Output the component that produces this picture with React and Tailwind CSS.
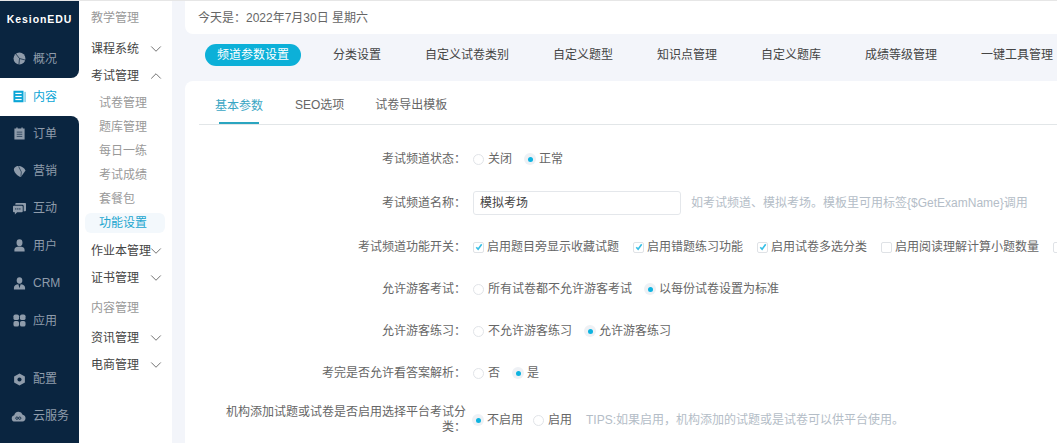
import React from 'react';
import { ChevronDown, ChevronUp } from 'lucide-react';

const NAVY = '#0a2540';

function PieIcon() {
  return (
    <svg width="13" height="13" viewBox="0 0 14 14">
      <circle cx="7" cy="7" r="6.4" fill="currentColor" />
      <path d="M7 7L3.2 2.2M7 7l6 1.600M7 7l-.6 6.400" stroke={NAVY} strokeWidth="0.8" fill="none" />
    </svg>
  );
}

function ListIcon() {
  return (
    <svg width="13" height="13" viewBox="0 0 14 14">
      <rect x="0.5" y="0.8" width="10.800" height="12.400" fill="currentColor" />
      <rect x="12.300" y="2" width="1.400" height="11" fill="currentColor" opacity="0.6" />
      <rect x="2.500" y="3" width="6.800" height="1.300" fill="#fff" />
      <rect x="2.500" y="6.300" width="6.800" height="1.300" fill="#fff" />
      <rect x="2.500" y="9.600" width="6.800" height="1.300" fill="#fff" />
    </svg>
  );
}

function OrderIcon() {
  return (
    <svg width="13" height="13" viewBox="0 0 14 14">
      <path d="M1.500 1.500h2V.5h1.500v1h4v-1h1.500v1h2v12h-11z" fill="currentColor" />
      <rect x="4" y="5" width="6" height="1" fill={NAVY} opacity="0.7" />
      <rect x="4" y="7.300" width="6" height="1" fill={NAVY} opacity="0.7" />
      <rect x="4" y="9.600" width="6" height="1" fill={NAVY} opacity="0.7" />
    </svg>
  );
}

function MarketIcon() {
  return (
    <svg width="13" height="13" viewBox="0 0 14 14">
      <path d="M1 5.500C.6 3 3 1 6 1c3 0 6 1.800 7.500 4.800L8.500 13C5 12.500 1.500 8.500 1 5.500z" fill="currentColor" />
      <path d="M6 1.500L9 7.500 8.500 12.500" stroke={NAVY} strokeWidth="0.7" fill="none" />
    </svg>
  );
}

function ChatIcon() {
  return (
    <svg width="13" height="13" viewBox="0 0 14 14">
      <path d="M3.500 1h9.500a1 1 0 0 1 1 1v7a1 1 0 0 1-1 1h-1.500V4.500A1.500 1.500 0 0 0 10 3H2.500V2a1 1 0 0 1 1-1z" fill="currentColor" />
      <path d="M1 4h8.500a1 1 0 0 1 1 1v5a1 1 0 0 1-1 1H4.500L2 13.500V11H1a1 1 0 0 1-1-1V5a1 1 0 0 1 1-1z" fill="currentColor" />
      <circle cx="3" cy="7.500" r="0.700" fill={NAVY} />
      <circle cx="5.200" cy="7.500" r="0.700" fill={NAVY} />
      <circle cx="7.400" cy="7.500" r="0.700" fill={NAVY} />
    </svg>
  );
}

function UserIcon() {
  return (
    <svg width="13" height="13" viewBox="0 0 14 14" fill="currentColor">
      <ellipse cx="7" cy="4" rx="3.200" ry="3.600" />
      <path d="M1.500 13.500v-2C1.500 9.200 4 8 7 8s5.500 1.200 5.500 3.500v2z" />
    </svg>
  );
}

function CrmIcon() {
  return (
    <svg width="13" height="13" viewBox="0 0 14 14" fill="currentColor">
      <ellipse cx="7" cy="3.800" rx="3" ry="3.400" />
      <path d="M1 13.500v-2C1 9.400 3.200 8.200 5.800 7.900L7 12l1.200-4.100c2.600.3 4.800 1.500 4.800 3.600v2z" />
    </svg>
  );
}

function AppIcon() {
  return (
    <svg width="13" height="13" viewBox="0 0 14 14" fill="currentColor">
      <rect x="0.500" y="0.500" width="6" height="6" rx="2" />
      <rect x="7.500" y="0.500" width="6" height="6" rx="2" />
      <rect x="0.500" y="7.500" width="6" height="6" rx="2" />
      <rect x="7.500" y="7.500" width="6" height="6" rx="2" />
    </svg>
  );
}

function ConfigIcon() {
  return (
    <svg width="13" height="13" viewBox="0 0 14 14">
      <path d="M7 .5l5.800 3.200v6.600L7 13.500l-5.800-3.200V3.700z" fill="currentColor" />
      <circle cx="7" cy="7" r="2.200" fill={NAVY} />
    </svg>
  );
}

function CloudIcon() {
  return (
    <svg width="15" height="13" viewBox="0 0 16 14" className="-ml-[2px]">
      <path d="M4 12.500a3.500 3.500 0 0 1-.6-6.900 4.800 4.800 0 0 1 9.100-.6 3.800 3.800 0 0 1-.3 7.500z" fill="currentColor" />
      <circle cx="6.300" cy="8.800" r="1.300" fill="none" stroke={NAVY} strokeWidth="0.900" />
      <circle cx="9.300" cy="8.800" r="1.300" fill="none" stroke={NAVY} strokeWidth="0.900" />
    </svg>
  );
}

const mainMenu = [
  { name: '概况', icon: PieIcon },
  { name: '内容', icon: ListIcon, active: true },
  { name: '订单', icon: OrderIcon },
  { name: '营销', icon: MarketIcon },
  { name: '互动', icon: ChatIcon },
  { name: '用户', icon: UserIcon },
  { name: 'CRM', icon: CrmIcon },
  { name: '应用', icon: AppIcon },
];

const bottomMenu = [
  { name: '配置', icon: ConfigIcon },
  { name: '云服务', icon: CloudIcon },
];

function MainItem({ item }) {
  const Icon = item.icon;
  if (item.active) {
    return (
      <div className="flex h-[38px] items-center gap-[7px] bg-white pb-[1px] pl-[13px] text-[#0aa5d6]">
        <Icon />
        <span>{item.name}</span>
      </div>
    );
  }
  return (
    <div className="flex h-[37.4px] items-center gap-[7px] pb-[2px] pl-[13px] text-[#8f9cab]">
      <Icon />
      <span>{item.name}</span>
    </div>
  );
}

function Group({ name, open }) {
  return (
    <div className="flex h-[27px] items-center pl-3 pr-[7px] text-[#444]">
      <span className="min-w-0 flex-1 whitespace-nowrap">{name}</span>
      {open ? (
        <ChevronUp size={18} strokeWidth={1} color="#444" className="shrink-0" />
      ) : (
        <ChevronDown size={18} strokeWidth={1} color="#444" className="shrink-0" />
      )}
    </div>
  );
}

function SubItem({ name, active }) {
  if (active) {
    return (
      <div className="my-[2px] ml-[6px] mr-[7px] flex h-[20px] items-center rounded-md bg-[#f3f8fc] pl-[14px] text-[#22a6cf]">
        {name}
      </div>
    );
  }
  return <div className="ml-[6px] flex h-[24px] items-center pl-[14px] text-[#999]">{name}</div>;
}

function Radio({ checked, label }) {
  return (
    <span className="flex items-center gap-[4px] whitespace-nowrap text-[#666]">
      {checked ? (
        <span className="flex h-[10px] w-[10px] items-center justify-center rounded-full bg-[#eef1f5] ring-1 ring-[#eef1f5]">
          <span className="h-[5px] w-[5px] rounded-full bg-[#0db3e0]" />
        </span>
      ) : (
        <span className="h-[11px] w-[11px] rounded-full border border-[#e1e4e8] bg-white" />
      )}
      <span>{label}</span>
    </span>
  );
}

function Check({ checked, label }) {
  return (
    <span className="flex shrink-0 items-center gap-[3px] whitespace-nowrap text-[#666]">
      <span className="flex h-[11px] w-[11px] items-center justify-center rounded-[2px] border border-[#dfe2e6] bg-white">
        {checked && (
          <svg width="8" height="8" viewBox="0 0 8 8" fill="none">
            <path d="M1.300 4.300l1.800 2L6.700 1.200" stroke="#35bfe6" strokeWidth="1.600" />
          </svg>
        )}
      </span>
      {label && <span>{label}</span>}
    </span>
  );
}

function Row({ label, children, className }) {
  return (
    <div className={'flex items-center ' + className}>
      <div className="w-[288px] shrink-0 pl-[20px] pr-[7px] text-right text-[#666]">{label}</div>
      <div className="flex min-w-0 flex-1 items-center">{children}</div>
    </div>
  );
}

export default function App() {
  return (
    <div
      className="flex h-[443px] w-[1057px] overflow-hidden border-t border-[#e6e6e6] bg-[#f3f5fa] text-[12px]"
      style={{ fontFamily: '"Liberation Sans", "Noto Sans CJK SC", sans-serif' }}
    >
      <aside className="w-[79px] shrink-0 bg-white">
        <div className="h-[77px] rounded-br-lg bg-[#0a2540]">
          <div className="flex h-[37px] items-end justify-center pb-[10px] text-[10.5px] font-bold tracking-[0.9px] text-white">KesionEDU</div>
          <div className="mt-[3px]">
            <MainItem item={mainMenu[0]} />
          </div>
        </div>
        <MainItem item={mainMenu[1]} />
        <div className="h-[327px] rounded-tr-lg bg-[#0a2540]">
          {mainMenu.slice(2).map((item) => (
            <MainItem key={item.name} item={item} />
          ))}
          <div className="h-[21px]" />
          {bottomMenu.map((item) => (
            <MainItem key={item.name} item={item} />
          ))}
        </div>
      </aside>

      <nav className="w-[93px] shrink-0 bg-white pt-[3px]">
        <div className="flex h-[27px] items-center pl-3 text-[#999]">教学管理</div>
        <div className="h-[4px]" />
        <Group name="课程系统" />
        <Group name="考试管理" open />
        <div className="h-[2px]" />
        <SubItem name="试卷管理" />
        <SubItem name="题库管理" />
        <SubItem name="每日一练" />
        <SubItem name="考试成绩" />
        <SubItem name="套餐包" />
        <SubItem name="功能设置" active />
        <div className="h-[2px]" />
        <Group name="作业本管理" />
        <Group name="证书管理" />
        <div className="flex h-[33px] items-center pl-3 text-[#999]">内容管理</div>
        <Group name="资讯管理" />
        <Group name="电商管理" />
      </nav>

      <main className="min-w-0 flex-1">
        <div className="ml-[13px] flex h-[33px] items-center rounded-bl-lg bg-white pl-[13px] text-[#666]">今天是：2022年7月30日 星期六</div>
        <div className="ml-[33px] flex h-[47px] items-center gap-[20px] whitespace-nowrap pb-[5px] text-[#444]">
          <span className="flex h-[22px] items-center rounded-full bg-[#0cb0d8] px-[12px] text-white">频道参数设置</span>
          <span className="px-[12px]">分类设置</span>
          <span className="px-[12px]">自定义试卷类别</span>
          <span className="px-[12px]">自定义题型</span>
          <span className="px-[12px]">知识点管理</span>
          <span className="px-[12px]">自定义题库</span>
          <span className="px-[12px]">成绩等级管理</span>
          <span className="px-[12px]">一键工具管理</span>
        </div>
        <section className="ml-[13px] h-[362px] overflow-hidden rounded-tl-lg bg-white">
          <div className="ml-[14px] flex h-[44px] items-end gap-[31px] border-b border-[#e2e6e8] pl-[16px] text-[#666]">
            <div className="mr-[1px] flex h-[44px] w-[48px] flex-col items-center justify-between text-[#3aa6c4]">
              <span className="mt-[17px] whitespace-nowrap">基本参数</span>
              <span className="h-[2px] w-[40px] bg-[#2aa5c0]" />
            </div>
            <span className="mb-[10px]">SEO选项</span>
            <span className="mb-[10px]">试卷导出模板</span>
          </div>
          <Row label="考试频道状态：" className="mt-[24px] h-[20px]">
            <div className="flex gap-[13px]">
              <Radio label="关闭" />
              <Radio checked label="正常" />
            </div>
          </Row>
          <Row label="考试频道名称：" className="mt-[22px] h-[24px]">
            <div className="flex h-[24px] w-[208px] items-center rounded-[3px] border border-[#e4e7eb] pl-[6px] text-[#444]">模拟考场</div>
            <span className="ml-[10px] whitespace-nowrap text-[#b4bdc7]">如考试频道、模拟考场。模板里可用标签{'{$GetExamName}'}调用</span>
          </Row>
          <Row label="考试频道功能开关：" className="mt-[22px] h-[20px]">
            <div className="flex gap-[14px]">
              <Check checked label="启用题目旁显示收藏试题" />
              <Check checked label="启用错题练习功能" />
              <Check checked label="启用试卷多选分类" />
              <Check label="启用阅读理解计算小题数量" />
              <Check />
            </div>
          </Row>
          <Row label="允许游客考试：" className="mt-[22px] h-[20px]">
            <div className="flex gap-[13px]">
              <Radio label="所有试卷都不允许游客考试" />
              <Radio checked label="以每份试卷设置为标准" />
            </div>
          </Row>
          <Row label="允许游客练习：" className="mt-[22px] h-[20px]">
            <div className="flex gap-[13px]">
              <Radio label="不允许游客练习" />
              <Radio checked label="允许游客练习" />
            </div>
          </Row>
          <Row label="考完是否允许看答案解析：" className="mt-[22px] h-[20px]">
            <div className="flex gap-[13px]">
              <Radio label="否" />
              <Radio checked label="是" />
            </div>
          </Row>
          <Row label={<span className="block leading-[15px]">机构添加试题或试卷是否启用选择平台考试分类：</span>} className="mt-[19px] h-[36px]">
            <div className="flex gap-[10px]">
              <Radio checked label="不启用" />
              <Radio label="启用" />
            </div>
            <span className="ml-[14px] whitespace-nowrap text-[#b4bdc7]">TIPS:如果启用，机构添加的试题或是试卷可以供平台使用。</span>
          </Row>
        </section>
      </main>
    </div>
  );
}
